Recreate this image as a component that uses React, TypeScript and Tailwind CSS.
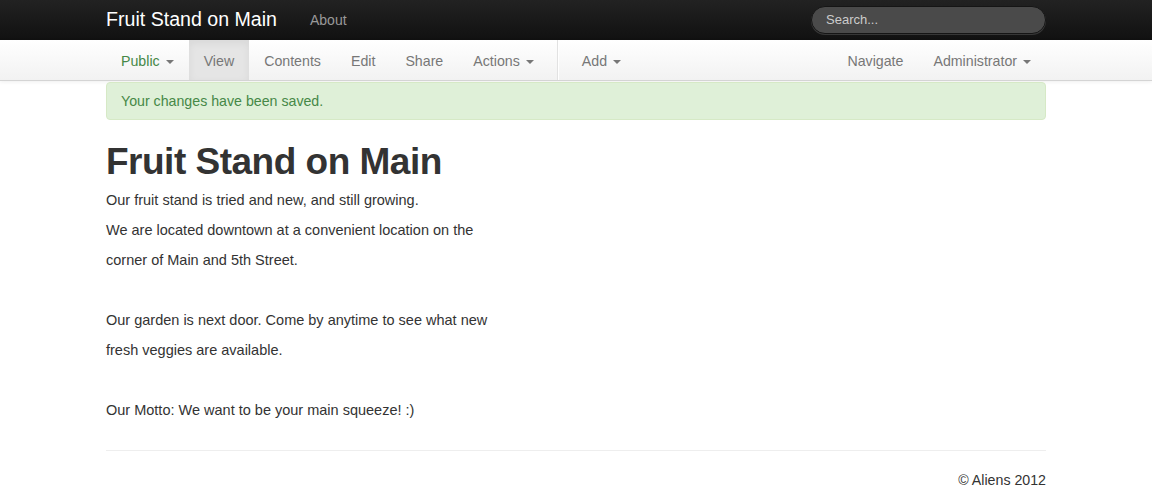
const font = { fontFamily: '"Liberation Sans", Arial, sans-serif' };

function Caret() {
  return (
    <span className="ml-[6px] mt-[1px] inline-block h-0 w-0 border-x-[4px] border-t-[4px] border-x-transparent border-t-[#777] align-middle" />
  );
}

const leftItems = [
  { label: "Public", caret: true, green: true },
  { label: "View", active: true },
  { label: "Contents" },
  { label: "Edit" },
  { label: "Share" },
  { label: "Actions", caret: true },
];

function NavLink({
  label,
  caret,
  active,
  green,
}: {
  label: string;
  caret?: boolean;
  active?: boolean;
  green?: boolean;
}) {
  return (
    <a
      className={`flex h-[40px] items-center px-[15px] pt-[3px] text-[14.2px] ${
        green ? "text-[#468847]" : "text-[#777]"
      } ${active ? "bg-[#e5e5e5] shadow-[inset_0_3px_8px_rgba(0,0,0,0.06)]" : ""}`}
    >
      {label}
      {caret && <Caret />}
    </a>
  );
}

export default function App() {
  return (
    <div className="h-[487px] overflow-hidden bg-white text-[#333]" style={font}>
      <div className="h-[40px] bg-gradient-to-b from-[#222] to-[#111]">
        <div className="mx-auto flex h-full w-[940px] items-center">
          <span className="text-[19.6px] text-white">Fruit Stand on Main</span>
          <span className="ml-[33px] text-[14px] text-[#999]">About</span>
          <div className="ml-auto flex h-[28px] w-[235px] items-center rounded-full border border-[#151515] bg-[#4a4a4a] px-[14px] text-[13px] text-[#ccc] shadow-[0_1px_0_rgba(255,255,255,0.15)]">
            Search...
          </div>
        </div>
      </div>

      <div className="h-[41px] border-b border-[#d4d4d4] bg-gradient-to-b from-white to-[#f2f2f2] shadow-[0_1px_4px_rgba(0,0,0,0.065)]">
        <div className="mx-auto flex h-[40px] w-[940px]">
          {leftItems.map((item) => (
            <NavLink key={item.label} {...item} />
          ))}
          <div className="mx-[8px] h-[40px] border-l border-r border-l-[#e2e2e2] border-r-white" />
          <NavLink label="Add" caret />
          <div className="ml-auto flex">
            <NavLink label="Navigate" />
            <NavLink label="Administrator" caret />
          </div>
        </div>
      </div>

      <div className="mx-auto w-[940px]">
        <div className="mt-[1px] rounded-[4px] border border-[#d6e9c6] bg-[#dff0d8] px-[14px] py-[8px] text-[14.2px] leading-[20px] text-[#468847]">
          Your changes have been saved.
        </div>

        <h1 className="mt-[22px] text-[37px] font-bold leading-[40px] tracking-[-0.5px] text-[#333]">
          Fruit Stand on Main
        </h1>

        <div className="mt-[8px] text-[14.5px] leading-[20px]">
          <p className="mb-[10px]">Our fruit stand is tried and new, and still growing.</p>
          <p className="mb-[10px]">We are located downtown at a convenient location on the</p>
          <p className="mb-[10px]">corner of Main and 5th Street.</p>
          <p className="mb-[10px] h-[20px]"></p>
          <p className="mb-[10px]">Our garden is next door. Come by anytime to see what new</p>
          <p className="mb-[10px]">fresh veggies are available.</p>
          <p className="mb-[10px] h-[20px]"></p>
          <p className="mb-[10px]">Our Motto: We want to be your main squeeze! :)</p>
        </div>

        <hr className="mt-[30px] border-t border-[#eee]" />

        <div className="pt-[23px] text-right text-[14.2px] leading-[12px]">© Aliens 2012</div>
      </div>
    </div>
  );
}
